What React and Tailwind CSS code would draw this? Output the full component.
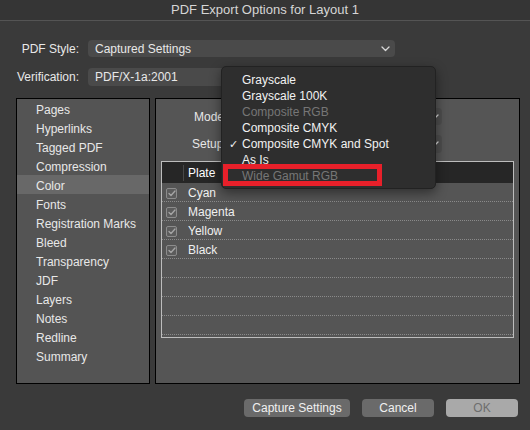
import React from "react";

const sections = [
  "Pages",
  "Hyperlinks",
  "Tagged PDF",
  "Compression",
  "Color",
  "Fonts",
  "Registration Marks",
  "Bleed",
  "Transparency",
  "JDF",
  "Layers",
  "Notes",
  "Redline",
  "Summary",
];

const plates = ["Cyan", "Magenta", "Yellow", "Black", "", "", "", ""];

const menuItems = [
  { label: "Grayscale" },
  { label: "Grayscale 100K" },
  { label: "Composite RGB", disabled: true },
  { label: "Composite CMYK" },
  { label: "Composite CMYK and Spot", checked: true },
  { label: "As Is" },
  { label: "Wide Gamut RGB", disabled: true },
];

const Chevron = () => (
  <svg width="9" height="6" viewBox="0 0 9 6" fill="none">
    <path d="M1 1l3.5 3.5L8 1" stroke="#d8d8d8" strokeWidth="1.3" strokeLinecap="round" strokeLinejoin="round" />
  </svg>
);

const CheckBox = () => (
  <div className="w-[11px] h-[11px] rounded-[2px] border border-[#8c8c8c] bg-[#5c5c5c] flex items-center justify-center">
    <svg width="8" height="7" viewBox="0 0 8 7" fill="none">
      <path d="M1 3.5l2 2L7 1" stroke="#a6a6a6" strokeWidth="1.3" strokeLinecap="round" strokeLinejoin="round" />
    </svg>
  </div>
);

const App = () => {
  return (
    <div
      className="relative w-[530px] h-[430px] bg-[#3a3a3a] text-[12px] text-[#e8e8e8] overflow-hidden"
      style={{ fontFamily: '"Liberation Sans", Arial, sans-serif' }}
    >
      {/* title bar */}
      <div className="h-[21px] bg-[#353535] border-b border-[#545454] flex items-center justify-center text-[13px] text-[#d6d6d6]">
        PDF Export Options for Layout 1
      </div>

      {/* style + verification */}
      <div className="pt-[19px] flex flex-col gap-[11px]">
        <div className="flex items-center h-[17px]">
          <div className="w-[79px] text-right">PDF Style:</div>
          <div className="ml-[9px] w-[307px] h-[17px] rounded-[4px] bg-[#4a4a4a] flex items-center justify-between pl-[7px] pr-[5px]">
            <span>Captured Settings</span>
            <Chevron />
          </div>
        </div>
        <div className="flex items-center h-[18px]">
          <div className="w-[79px] text-right">Verification:</div>
          <div className="ml-[9px] w-[307px] h-[18px] rounded-[4px] bg-[#4a4a4a] flex items-center pl-[7px]">
            <span>PDF/X-1a:2001</span>
          </div>
        </div>
      </div>

      {/* panels */}
      <div className="mt-[12px] ml-[16px] flex gap-[5px]">
        <div className="w-[134px] h-[286px] border border-black bg-[#545454]">
          {sections.map((s) => (
            <div
              key={s}
              className={`h-[19px] pt-[2px] leading-[18px] pl-[19px] ${s === "Color" ? "bg-[#686868]" : ""}`}
            >
              {s}
            </div>
          ))}
        </div>

        <div className="w-[365px] h-[286px] border border-black bg-[#555555]">
          <div className="mt-[9px] flex flex-col gap-[10px]">
            <div className="flex items-center h-[17px]">
              <div className="w-[38px] ml-[38px]">Mode</div>
              <div className="ml-[10px] w-[200px] h-[17px] rounded-[4px] bg-[#4d4d4d] flex items-center justify-end pr-[3px]">
                <Chevron />
              </div>
            </div>
            <div className="flex items-center h-[18px]">
              <div className="w-[38px] ml-[36px]">Setup</div>
              <div className="ml-[12px] w-[200px] h-[18px] rounded-[4px] bg-[#4d4d4d] flex items-center justify-end pr-[3px]">
                <Chevron />
              </div>
            </div>
          </div>

          {/* plates table */}
          <div className="mt-[8px] ml-[5px] w-[353px] h-[177px] border border-[#bdbdbd]">
            <div className="h-[21px] bg-[#262626] flex items-center">
              <div className="w-[22px] h-[16px] border-r border-[#484848]" />
              <div className="pl-[4px] text-white">Plate</div>
            </div>
            {plates.map((p, i) => (
              <div
                key={i}
                className="h-[19px] border-b border-dotted border-[#8a8a8a] flex items-center pt-[2px] pl-[4px] gap-[11px]"
              >
                {p && (
                  <>
                    <CheckBox />
                    <span className="text-[#f0f0f0]">{p}</span>
                  </>
                )}
              </div>
            ))}
          </div>
        </div>
      </div>

      {/* buttons */}
      <div className="mt-[15px] pr-[12px] flex justify-end gap-[12px]">
        <button className="w-[106px] h-[18px] rounded-[4px] bg-[#6a6a6a] text-[#f0f0f0]">Capture Settings</button>
        <button className="w-[72px] h-[18px] rounded-[4px] bg-[#6a6a6a] text-[#f0f0f0]">Cancel</button>
        <button className="w-[72px] h-[18px] rounded-[4px] bg-[#a9a9a9] text-[#6e6e6e]">OK</button>
      </div>

      {/* open popup menu */}
      <div className="absolute left-[221px] top-[66px] w-[215px] h-[123px] rounded-[5px] bg-[#2e2e2e] border border-[#222] shadow-[0_4px_12px_rgba(0,0,0,0.45)] pt-[5px]">
        {menuItems.map((m) => (
          <div
            key={m.label}
            className={`relative h-[16px] leading-[16px] pl-[20px] ${m.disabled ? "text-[#767676]" : "text-[#f2f2f2]"}`}
          >
            {m.checked && <span className="absolute left-[7px] top-0 text-[11px]">✓</span>}
            {m.label}
          </div>
        ))}
      </div>

      {/* highlight annotation */}
      <div className="absolute left-[223px] top-[164px] w-[159px] h-[22px] border-[5px] border-[#e8202a]" />
    </div>
  );
};

export default App;
